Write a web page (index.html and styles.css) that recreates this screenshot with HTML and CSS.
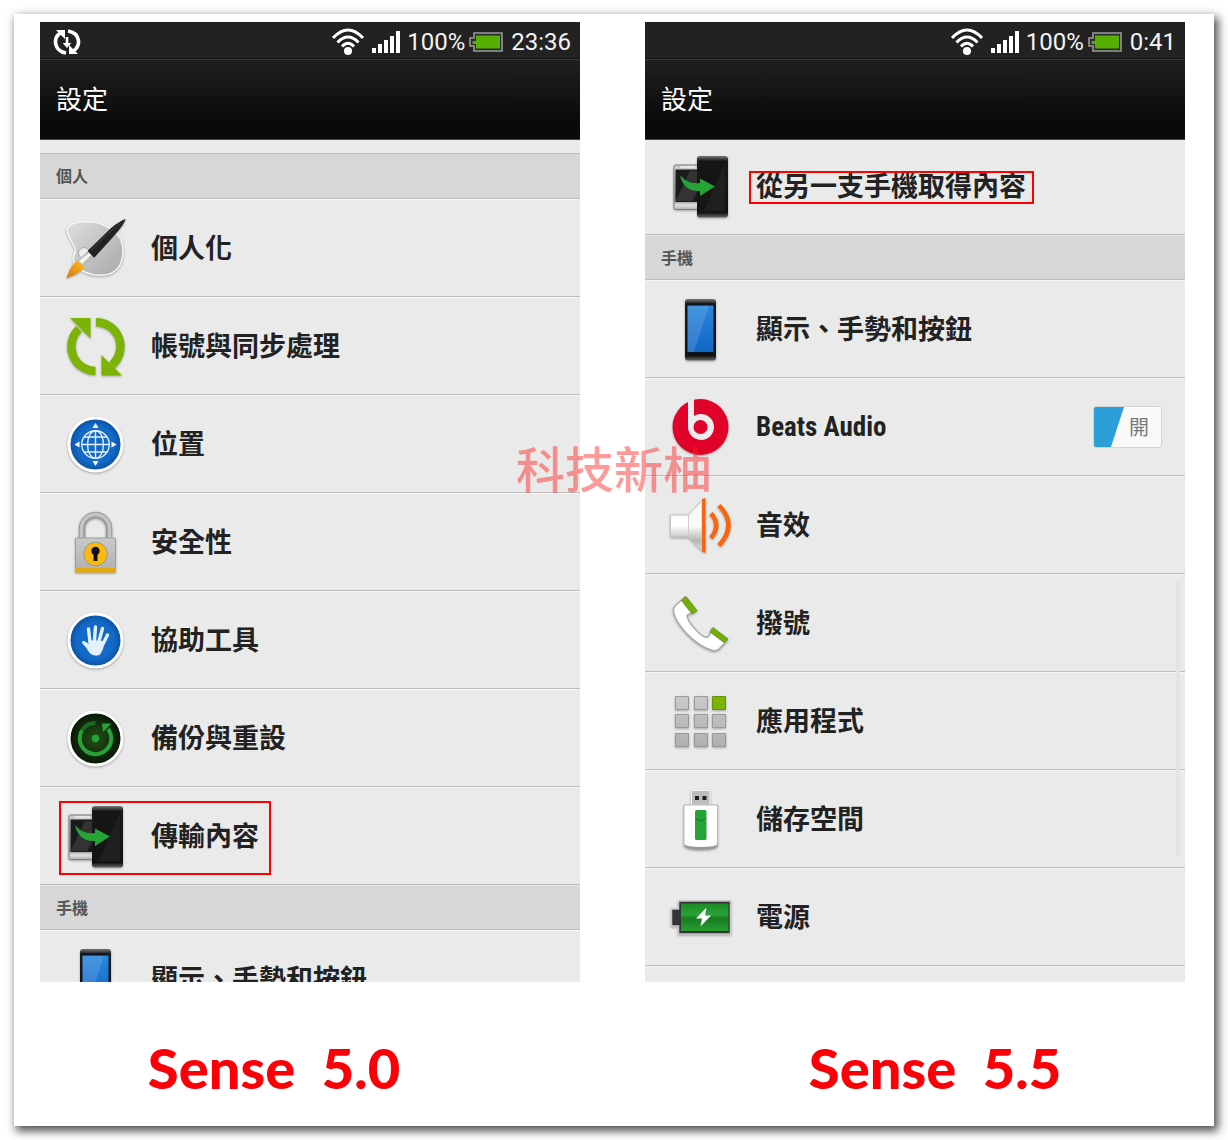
FILE: index.html
```html
<!DOCTYPE html>
<html lang="zh-Hant">
<head>
    <meta charset="UTF-8">
    <meta name="viewport" content="width=device-width, initial-scale=1.0">
    <title>Sense 5.0 / Sense 5.5</title>
    <link rel="stylesheet" href="styles.css">
</head>
<body>

<!-- Shared gradients and symbols -->
<svg class="defs" width="0" height="0" aria-hidden="true">
    <defs>
        <linearGradient id="gray" x1="0" y1="0" x2="1" y2="1">
            <stop offset="0" stop-color="#dedede"/>
            <stop offset="1" stop-color="#a8a8a8"/>
        </linearGradient>
        <linearGradient id="steel" x1="0" y1="0" x2="0" y2="1">
            <stop offset="0" stop-color="#c9c9c9"/>
            <stop offset="1" stop-color="#b0b0b0"/>
        </linearGradient>
        <linearGradient id="blueScreen" x1="0" y1="0" x2="0" y2="1">
            <stop offset="0" stop-color="#2a86dc"/>
            <stop offset="1" stop-color="#1266c4"/>
        </linearGradient>
        <radialGradient id="blueDisc">
            <stop offset="0.7" stop-color="#1269c8"/>
            <stop offset="1" stop-color="#0c4f9e"/>
        </radialGradient>
        <radialGradient id="greenDisc">
            <stop offset="0" stop-color="#235217"/>
            <stop offset="1" stop-color="#081607"/>
        </radialGradient>
        <linearGradient id="blackBody" x1="0" y1="0" x2="0" y2="1">
            <stop offset="0" stop-color="#777"/>
            <stop offset="0.08" stop-color="#1a1a1a"/>
            <stop offset="0.92" stop-color="#111"/>
            <stop offset="1" stop-color="#666"/>
        </linearGradient>
        <linearGradient id="whiteMetal" x1="0" y1="0" x2="0" y2="1">
            <stop offset="0" stop-color="#f4f4f4"/>
            <stop offset="0.5" stop-color="#fff"/>
            <stop offset="0.8" stop-color="#b4b4b4"/>
            <stop offset="1" stop-color="#e4e4e4"/>
        </linearGradient>
        <linearGradient id="silver" x1="0" y1="0" x2="0" y2="1">
            <stop offset="0" stop-color="#cfcfcf"/>
            <stop offset="0.8" stop-color="#8a8a8a"/>
            <stop offset="0.9" stop-color="#e2e2e2"/>
            <stop offset="1" stop-color="#b0b0b0"/>
        </linearGradient>
        <linearGradient id="bristle" x1="1" y1="0" x2="0" y2="1">
            <stop offset="0" stop-color="#ffc020"/>
            <stop offset="1" stop-color="#d9740a"/>
        </linearGradient>
        <linearGradient id="batteryGreen" x1="0" y1="0" x2="0" y2="1">
            <stop offset="0" stop-color="#1b8a26"/>
            <stop offset="0.4" stop-color="#2aa336"/>
            <stop offset="0.55" stop-color="#1a7a22"/>
            <stop offset="1" stop-color="#27a033"/>
        </linearGradient>

        <symbol id="wifi" viewBox="0 0 32 28">
            <circle cx="16" cy="23" r="4" fill="#fff"/>
            <path d="M1 10Q16 -6 31 10M5.500 14.500Q16 3.500 26.500 14.500M10 18.500Q16 12 22 18.500" fill="none" stroke="#fff" stroke-width="3"/>
        </symbol>
        <symbol id="signal" viewBox="0 0 28 22">
            <path d="M0 17h4v5H0zM6 13h4v9H6zM12 9h4v13h-4zM18 5h4v17h-4zM24 0h4v22h-4z" fill="#fff"/>
        </symbol>
        <symbol id="battery" viewBox="0 0 34 20">
            <path d="M5 1H33V19H5V14H1V6H5Z" fill="#2b2b2b" stroke="#9a9a9a" stroke-width="1.600"/>
            <path d="M7 3.500H31V16.500H7V12H3.500V9H7Z" fill="#55b003"/>
        </symbol>
        <symbol id="transfer" viewBox="0 0 64 64">
            <rect x="6" y="11" width="30" height="44.500" rx="1.500" fill="url(#silver)" stroke="#7d7d7d"/>
            <path d="M12 13H27" stroke="#fff"/>
            <path d="M7.500 15.500H30V48H7.500Z" fill="#1b1b1b"/>
            <path d="M8 46L22 17H30V36L24 47H8Z" fill="#333"/>
            <rect x="29" y="2" width="31" height="61.500" rx="3" fill="url(#blackBody)"/>
            <path d="M31 7H58V58H31Z" fill="#151515"/>
            <path d="M57 8V57H36Z" fill="#1f1f1f"/>
            <path d="M12 21C17 27 23 30 32 29V24.500L47 32.500L32 42V37C22 38 14 32 12 21Z" fill="#25a336"/>
        </symbol>
        <symbol id="display" viewBox="0 0 64 64">
            <rect x="17" y="2" width="31" height="61.500" rx="3" fill="url(#blackBody)"/>
            <path d="M19 6.500H46V57H19Z" fill="#0c1520"/>
            <path d="M19.500 8.500H45.500V55H19.500Z" fill="url(#blueScreen)"/>
            <path d="M41 9H19.500V55H26Z" fill="#fff" opacity="0.130"/>
        </symbol>
    </defs>
</svg>

<main class="sheet">

    <!-- Left side - Sense 5.0 -->
    <figure class="shot shot-left">
        <section class="phone">
            <div class="status-bar">
                <svg class="sync-icon" width="28" height="28" viewBox="0 0 28 28">
                    <path d="M13 25C1 23 -0.500 10 7.500 5M15 3C27 5 28.500 17 20.500 23" fill="none" stroke="#fff" stroke-width="3.600"/>
                    <path d="M3 2H12V11ZM16 17V26H25Z" fill="#fff"/>
                    <path d="M12.700 9h2.600v6h3L14 20l-4.300-5h3z" fill="#fff"/>
                </svg>
                <svg class="wifi" width="32" height="28"><use href="#wifi"/></svg>
                <svg class="signal" width="28" height="22"><use href="#signal"/></svg>
                <span>100%</span>
                <svg class="battery" width="34" height="20"><use href="#battery"/></svg>
                <span class="clock">23:36</span>
            </div>
            <h1 class="title">設定</h1>
            <div class="list list-personal">
                <h2 class="group">個人</h2>
                <div class="row">
                    <svg class="icon" viewBox="0 0 64 64">
                        <path d="M4 13C8 6 20 5 30 6C37 6 43 10 50 14C57 19 60 27 60 35C60 50 52 59 39 59C27 60 15 55 11 46C8 41 14 38 12 32C10 26 4 22 4 13Z" fill="url(#gray)" stroke="#f7f7f7" stroke-width="1.500"/>
                        <circle cx="21" cy="37" r="5.500" fill="#eee" stroke="#aaa"/>
                        <path d="M62.500 3C59 4 51 9 45 15L24.500 35L31 42L51 20C57 13 61 8 62.500 3Z" fill="#222"/>
                        <path d="M58 7C50 13 40 21 28 35" stroke="#444" fill="none"/>
                        <path d="M24.500 35L31 42L22 51L15 44.500Z" fill="#bbb"/>
                        <path d="M26 37L28 39L19 48L16 45Z" fill="#f5f5f5"/>
                        <path d="M15 44.500L21.500 51C18 57 10 59 3.500 62.500C6 56 8 48 15 44.500Z" fill="url(#bristle)"/>
                    </svg>
                    <a class="label" href="#">個人化</a>
                </div>
                <div class="row">
                    <svg class="icon" viewBox="0 0 64 64">
                        <path d="M32.500 57A24.300 24.300 0 0 1 16 15M33 8.300A24.300 24.300 0 0 1 49 51" fill="none" stroke="#7cb305" stroke-width="8.500"/>
                        <path d="M7 4H27.500V24.500ZM38.500 41V61.500H59Z" fill="#7cb305"/>
                    </svg>
                    <a class="label" href="#">帳號與同步處理</a>
                </div>
                <div class="row">
                    <svg class="icon" viewBox="0 0 64 64">
                        <circle cx="32.500" cy="32.500" r="26.500" fill="url(#blueDisc)" stroke="#fff" stroke-width="3"/>
                        <g fill="none" stroke="#e4f0fb" stroke-width="1.400">
                            <circle cx="32.500" cy="32.500" r="13.800"/>
                            <ellipse cx="32.500" cy="32.500" rx="8" ry="13.800"/>
                            <path d="M32.500 18.500V46.500M18.500 32.500H46.500M21 25H44M21 40H44"/>
                        </g>
                        <path d="M32.500 11L35.500 16H29.500ZM32.500 54L35.500 49H29.500ZM11.500 32.500L16.500 29.500V35.500ZM53.500 32.500L48.500 29.500V35.500Z" fill="#fff"/>
                    </svg>
                    <a class="label" href="#">位置</a>
                </div>
                <div class="row">
                    <svg class="icon" viewBox="0 0 64 64">
                        <path d="M19 30V18.500A13.500 13.500 0 0 1 46 18.500V30" fill="none" stroke="#999" stroke-width="6.500"/>
                        <path d="M18.500 30V18.500A14 14 0 0 1 46.500 18.500V30" fill="none" stroke="#c4c4c4" stroke-width="3.500"/>
                        <rect x="12.500" y="28" width="40" height="34" rx="1" fill="url(#steel)" stroke="#a0a0a0"/>
                        <path d="M12 58H53V62.500H12Z" fill="#e5a90a"/>
                        <circle cx="32.500" cy="44" r="11.800" fill="#fdb90d" stroke="#999"/>
                        <circle cx="32.500" cy="41" r="4.200" fill="#111"/>
                        <path d="M30.500 42H34.500V51H30.500Z" fill="#111"/>
                    </svg>
                    <a class="label" href="#">安全性</a>
                </div>
                <div class="row">
                    <svg class="icon" viewBox="0 0 64 64">
                        <circle cx="32.500" cy="32.500" r="26.500" fill="url(#blueDisc)" stroke="#fff" stroke-width="3"/>
                        <path d="M27 34L25.500 21M31.500 32L32.500 19M36 33L39.500 20.500M40 36L44.500 27" fill="none" stroke="#e2f1fb" stroke-width="3.400" stroke-linecap="round"/>
                        <path d="M25 32L41.500 33C41 38 40.500 41 38.500 44C37.500 47 35 48 32 47.500C27 47 25.500 43 23 39.500C21.500 37.500 19 36 19 34C20 31.500 23 34 26 36Z" fill="#e2f1fb"/>
                    </svg>
                    <a class="label" href="#">協助工具</a>
                </div>
                <div class="row">
                    <svg class="icon" viewBox="0 0 64 64">
                        <circle cx="32.500" cy="32.500" r="26.500" fill="url(#greenDisc)" stroke="#fff" stroke-width="3"/>
                        <path d="M19 24.500A15.700 15.700 0 1 0 45 23" fill="none" stroke="#25a336" stroke-width="4"/>
                        <path d="M32.500 17A15.700 15.700 0 0 0 19 24.500" fill="none" stroke="#1d6a22" stroke-width="4"/>
                        <path d="M39 17.500H48.500L40 26Z" fill="#25a336"/>
                        <circle cx="32.500" cy="32.500" r="3.700" fill="#25a336"/>
                    </svg>
                    <a class="label" href="#">備份與重設</a>
                </div>
                <div class="row">
                    <svg class="icon"><use href="#transfer"/></svg>
                    <a class="label" href="#">傳輸內容</a>
                    <span class="mark mark-row"></span>
                </div>
                <h2 class="group">手機</h2>
                <div class="row">
                    <svg class="icon"><use href="#display"/></svg>
                    <a class="label" href="#">顯示、手勢和按鈕</a>
                </div>
            </div>
        </section>
        <figcaption>Sense&nbsp; 5.0</figcaption>
    </figure>

    <!-- Right side - Sense 5.5 -->
    <figure class="shot shot-right">
        <section class="phone">
            <div class="status-bar">
                <svg class="wifi" width="32" height="28"><use href="#wifi"/></svg>
                <svg class="signal" width="28" height="22"><use href="#signal"/></svg>
                <span>100%</span>
                <svg class="battery" width="34" height="20"><use href="#battery"/></svg>
                <span class="clock">0:41</span>
            </div>
            <h1 class="title">設定</h1>
            <div class="list list-phone">
                <div class="row">
                    <svg class="icon"><use href="#transfer"/></svg>
                    <a class="label" href="#">從另一支手機取得內容</a>
                    <span class="mark mark-text"></span>
                </div>
                <h2 class="group">手機</h2>
                <div class="row">
                    <svg class="icon"><use href="#display"/></svg>
                    <a class="label" href="#">顯示、手勢和按鈕</a>
                </div>
                <div class="row">
                    <svg class="icon" viewBox="0 0 64 64">
                        <circle cx="32.500" cy="32" r="28" fill="#e00229"/>
                        <path d="M20 5.500L26 3.500V21A13 13 0 1 1 20 32Z" fill="#ececec"/>
                        <circle cx="32.500" cy="32" r="7" fill="#e00229"/>
                    </svg>
                    <a class="label latin" href="#">Beats Audio</a>
                    <label class="toggle">
                        <input type="checkbox" aria-label="Beats Audio" checked>
                        <span>開</span>
                    </label>
                </div>
                <div class="row">
                    <svg class="icon" viewBox="0 0 64 64">
                        <path d="M2.500 22H20.500L34 7.500V58L20.500 44H2.500Z" fill="url(#whiteMetal)" stroke="#c4c4c4"/>
                        <path d="M20.500 22V44" stroke="#ccc"/>
                        <path d="M34 6L37.500 5V60L34 58.500Z" fill="#f8650c"/>
                        <path d="M43 20.500Q53.500 32 43 45M51 12.500Q70 32 51 52.500" fill="none" stroke="#f8650c" stroke-width="4.500"/>
                    </svg>
                    <a class="label" href="#">音效</a>
                </div>
                <div class="row">
                    <svg class="icon" viewBox="0 0 64 64">
                        <path d="M17 6L28.500 20C25 23 20 22 19 24.500C19 30 32 46 39 46.500C41.500 46.500 42 42 44 38L59.500 49L51 58C49 60 46 60 43 59C25 53 8 33 5.500 21C5 18 6 16 8 14Z" fill="#fff" stroke="#a9a9a9" stroke-width="1.400"/>
                        <path d="M13.500 9.500L18 5.500L29 19.500L24 23ZM45 36.500L60 48L56 51.500L42 41Z" fill="#76ad0b" stroke="#5f9105" stroke-width="0.800"/>
                    </svg>
                    <a class="label" href="#">撥號</a>
                </div>
                <div class="row">
                    <svg class="icon" viewBox="0 0 64 64">
                        <g fill="url(#steel)" stroke="#999">
                            <path d="M7.500 7.500h13v13h-13zM26.500 7.500h13v13h-13zM7.500 25.500h13v13h-13zM26.500 25.500h13v13h-13zM44.500 25.500h13v13h-13zM7.500 44.500h13v13h-13zM26.500 44.500h13v13h-13zM44.500 44.500h13v13h-13z"/>
                        </g>
                        <path d="M44.500 7.500h13v13h-13z" fill="#7cb305" stroke="#659404"/>
                    </svg>
                    <a class="label" href="#">應用程式</a>
                </div>
                <div class="row">
                    <svg class="icon" viewBox="0 0 64 64">
                        <path d="M23.500 3.500H42V18H23.500Z" fill="#bdbdbd" stroke="#f8f8f8"/>
                        <path d="M27 9h4v4h-4zM34.500 9h4v4h-4z" fill="#222"/>
                        <path d="M16 18H49.500V59Q48 62 33 62Q18 62 16 59Z" fill="#fff" stroke="#b5b5b5"/>
                        <path d="M16.500 57Q18 60 33 60Q48 60 49.500 57V59Q48 63 33 63Q18 63 16.500 59Z" fill="#999"/>
                        <rect x="27" y="23" width="11.500" height="30" rx="1.500" fill="#25a336"/>
                        <path d="M27.500 31Q33 36 38 31" fill="none" stroke="#167523"/>
                    </svg>
                    <a class="label" href="#">儲存空間</a>
                </div>
                <div class="row">
                    <svg class="icon" viewBox="0 0 64 64">
                        <path d="M10.500 16H62.500V49H10.500V41H3.500V24H10.500Z" fill="#333" stroke="#c9c9c9" stroke-width="1.500"/>
                        <path d="M13 18.500H60.500V46H13Z" fill="url(#batteryGreen)"/>
                        <path d="M38.500 22.500L28 33.500H34L32.500 41.500L43 30.500H37Z" fill="#fff"/>
                    </svg>
                    <a class="label" href="#">電源</a>
                </div>
                <div class="row"></div>
            </div>
            <div class="scroll-thumb"></div>
        </section>
        <figcaption>Sense&nbsp; 5.5</figcaption>
    </figure>

    <div class="watermark">科技新柚</div>
</main>

</body>
</html>
```
FILE: styles.css
```css
body {
    margin: 0;
    padding: 14px;
    background-color: #ffffff;
    font-family: Roboto, "Noto Sans CJK TC", sans-serif;
    color: #222;
}

.defs {
    position: absolute;
}

.sheet {
    position: relative;
    display: grid;
    grid-template-columns: 1fr 1fr;
    column-gap: 65px;
    padding: 8px 29px 0 26px;
    background-color: #ffffff;
    box-shadow: 3px 4px 9px 1px rgba(0, 0, 0, 0.7);
}

.shot {
    margin: 0;
    min-width: 0;
}

.phone {
    position: relative;
    display: flex;
    flex-direction: column;
    aspect-ratio: 9 / 16;
    overflow: hidden;
    background-color: #eaeaea;
}

/* Black top part */
.status-bar {
    display: flex;
    align-items: center;
    justify-content: flex-end;
    height: 37px;
    flex: none;
    padding: 3px 9px 0 13px;
    box-sizing: border-box;
    background-color: #222;
    border-bottom: 1px solid #161616;
    color: #f4f4f4;
    font-size: 24px;
}

.sync-icon {
    margin-right: auto;
}

.signal {
    margin: 0 7px 0 8px;
}

.battery {
    margin: 0 8px 0 4px;
}

.title {
    position: relative;
    z-index: 1;
    flex: none;
    height: 81px;
    box-sizing: border-box;
    margin: 0;
    padding-left: 16px;
    border-top: 1px solid #383838;
    border-bottom: 1px solid #444;
    background: linear-gradient(#1f1f1f, #0a0a0a 80%);
    color: #fff;
    font-size: 26px;
    font-weight: 400;
    line-height: 80px;
}

/* Settings list */
.list {
    flex: none;
}

.list-personal {
    padding-top: 13px;
}

.list-phone {
    margin-top: -3px;
}

.group {
    height: 45px;
    box-sizing: border-box;
    margin: 0;
    padding-left: 16px;
    background-color: #d7d7d7;
    border-top: 1px solid #e6e6e6;
    border-bottom: 1px solid #bdbdbd;
    color: #555;
    font-size: 16px;
    font-weight: 700;
    line-height: 46px;
}

.list-personal .group:first-child {
    height: 46px;
    border-top-color: #bdbdbd;
}

.row {
    position: relative;
    display: flex;
    align-items: center;
    gap: 24px;
    height: 98px;
    box-sizing: border-box;
    padding: 0 23px;
    border-top: 1px solid #f6f6f6;
    border-bottom: 1px solid #bdbdbd;
}

.icon {
    flex: none;
    width: 64px;
    height: 64px;
    filter: drop-shadow(0 1px 1px rgba(0, 0, 0, 0.3));
}

.label {
    padding-bottom: 4px;
    color: #222;
    font-size: 27px;
    font-weight: 700;
    text-decoration: none;
    white-space: nowrap;
}

.latin {
    padding-bottom: 0;
    font-family: "Roboto Condensed", "Liberation Sans Narrow", Roboto, sans-serif;
}

.toggle {
    position: relative;
    width: 69px;
    height: 42px;
    margin-left: auto;
}

.toggle input {
    appearance: none;
    width: 100%;
    height: 100%;
    box-sizing: border-box;
    margin: 0;
    border: 1px solid #d4d4d4;
    border-radius: 3px;
    background: linear-gradient(#f0f0f0, #fcfcfc);
}

.toggle input:checked {
    background: linear-gradient(108deg, #2a9fd8 28px, #fafafa 29px);
}

.toggle span {
    position: absolute;
    top: 0;
    left: 36px;
    color: #777;
    font-size: 20px;
    line-height: 44px;
}

/* Red marks over the transfer entries */
.mark {
    position: absolute;
    box-sizing: border-box;
    border: 2px solid #ff0000;
}

.mark-row {
    top: 13px;
    left: 19px;
    width: 212px;
    height: 74px;
}

.mark-text {
    top: 33px;
    left: 104px;
    width: 285px;
    height: 33px;
}

.scroll-thumb {
    position: absolute;
    top: 560px;
    right: 5px;
    width: 4px;
    height: 274px;
    background-color: #e4e4e4;
}

.watermark {
    position: absolute;
    top: 433px;
    left: 0;
    right: 0;
    color: rgba(255, 30, 30, 0.45);
    font-size: 49px;
    font-weight: 500;
    line-height: 49px;
    text-align: center;
}

figcaption {
    padding: 50px 0 22px;
    color: #fb0007;
    font-family: Lato, sans-serif;
    font-size: 56px;
    font-weight: 900;
    line-height: 72px;
    text-align: center;
}

.shot-left figcaption {
    padding-right: 72px;
}

.shot-right figcaption {
    padding-left: 40px;
}
```
